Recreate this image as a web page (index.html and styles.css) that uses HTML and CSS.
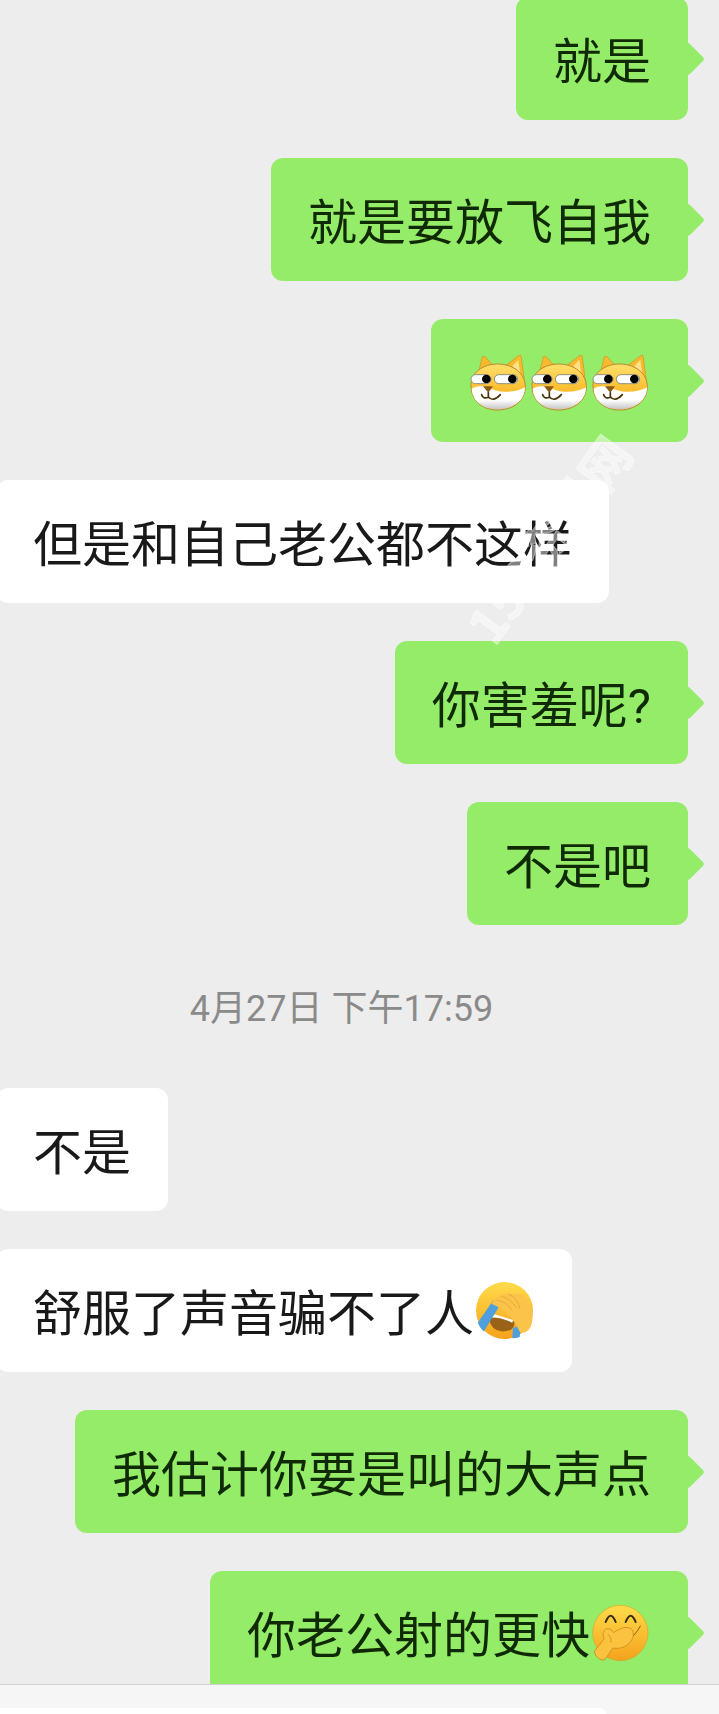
FILE: index.html
```html
<!DOCTYPE html>
<html lang="zh-CN">
<head>
<meta charset="UTF-8">
<meta name="viewport" content="width=device-width, initial-scale=1.0">
<title>聊天记录</title>
<link rel="stylesheet" href="styles.css">
</head>
<body>

<svg class="defs" aria-hidden="true">
  <defs>
    <linearGradient id="dogeFur" x1="0" y1="0" x2="0" y2="1">
      <stop offset="0" stop-color="#ffe06a"/>
      <stop offset="0.6" stop-color="#fbbb2c"/>
      <stop offset="1" stop-color="#f8b224"/>
    </linearGradient>
    <linearGradient id="dogeChin" x1="0" y1="0" x2="0" y2="1">
      <stop offset="0.6" stop-color="#ffffff"/>
      <stop offset="1" stop-color="#c4c4c4"/>
    </linearGradient>
    <linearGradient id="faceYellow" x1="0" y1="0" x2="0" y2="1">
      <stop offset="0" stop-color="#ffdc4a"/>
      <stop offset="1" stop-color="#f5a21c"/>
    </linearGradient>

    <symbol id="doge" viewBox="25 18 183 183">
      <path d="M58 80 L68 38 Q72 34 78 40 L100 64 Z" fill="#f9b92c" stroke="#c8922c" stroke-width="2"/>
      <path d="M134 68 L178 34 Q184 32 185 40 L194 110 Z" fill="#f9b92c" stroke="#c8922c" stroke-width="2"/>
      <path d="M158 66 L176 48 L182 92 Z" fill="#fde08a"/>
      <path d="M34 124 C34 84 72 60 114 60 C160 60 197 88 197 128 C197 172 158 198 114 198 C70 198 34 172 34 124 Z" fill="url(#dogeFur)" stroke="#b98a2e" stroke-width="3"/>
      <path d="M36 134 C60 120 82 128 104 138 C134 148 172 144 196 130 C196 172 158 196 114 196 C70 196 38 172 36 134 Z" fill="url(#dogeChin)"/>
      <rect x="34" y="92" width="60" height="27" rx="13.5" fill="#fff" stroke="#8f8f7a" stroke-width="3"/>
      <rect x="104" y="92" width="70" height="27" rx="13.5" fill="#fff" stroke="#8f8f7a" stroke-width="3"/>
      <circle cx="80" cy="105" r="13" fill="#000"/>
      <circle cx="158" cy="105" r="13" fill="#000"/>
      <path d="M70 127 H100 L86 146 Z" fill="#8a5a14"/>
      <path d="M66 152 Q70 166 86 160 M86 146 V158 Q100 176 122 152" fill="none" stroke="#4a3208" stroke-width="5" stroke-linecap="round"/>
    </symbol>

    <symbol id="facepalm" viewBox="15 24 180 180">
      <circle cx="105" cy="114" r="84" fill="url(#faceYellow)"/>
      <path d="M60 138 Q100 124 134 148 Q136 176 98 176 Q64 172 60 138 Z" fill="#9a6118"/>
      <path d="M64 122 L130 142 L128 150 Q96 134 60 134 Z" fill="#fff"/>
      <path d="M72 84 L92 98 L44 176 Q34 168 26 150 Z" fill="#4e9fdc"/>
      <path d="M130 166 L152 158 L150 192 Q140 196 128 196 Z" fill="#4e9fdc"/>
      <path d="M66 94 C84 66 112 60 134 66 C160 58 190 90 188 134 C186 160 178 182 152 180 C142 162 134 142 118 128 C104 114 86 102 66 94 Z" fill="#fbc349"/>
      <path d="M84 84 Q110 86 126 112 M96 72 Q122 78 140 106 M118 66 Q146 78 150 108" fill="none" stroke="#d9a02c" stroke-width="2" stroke-linecap="round"/>
    </symbol>

    <symbol id="handmouth" viewBox="15 12 183 183">
      <circle cx="106" cy="105" r="83" fill="url(#faceYellow)" stroke="#d9951c" stroke-width="1.5"/>
      <path d="M62 72 Q77 34 92 72 M122 72 Q137 34 152 72" fill="none" stroke="#3a2a10" stroke-width="6" stroke-linecap="round"/>
      <path d="M132 122 Q152 112 166 84" fill="none" stroke="#8a5a14" stroke-width="3" stroke-linecap="round"/>
      <path d="M28 160 L58 122 C50 110 56 92 70 92 C78 92 82 100 86 104 C104 90 126 84 138 92 C150 102 146 124 132 136 C116 152 98 152 84 150 L60 184 Q50 190 42 182 Q28 172 28 160 Z" fill="#fbc23f" stroke="#c98a1e" stroke-width="2.5"/>
      <path d="M70 110 Q82 120 78 132" fill="none" stroke="#c98a1e" stroke-width="2.5" stroke-linecap="round"/>
    </symbol>
  </defs>
</svg>

<div class="chat">
  <div class="row me"><div class="bubble">就是</div></div>
  <div class="row me"><div class="bubble">就是要放飞自我</div></div>
  <div class="row me">
    <div class="bubble">
      <svg class="emoji"><use href="#doge"/></svg><svg class="emoji"><use href="#doge"/></svg><svg class="emoji"><use href="#doge"/></svg>
    </div>
  </div>
  <div class="row"><div class="bubble">但是和自己老公都不这样</div></div>
  <div class="row me"><div class="bubble">你害羞呢?</div></div>
  <div class="row me"><div class="bubble">不是吧</div></div>
  <div class="time">4月27日 下午17:59</div>
  <div class="row"><div class="bubble">不是</div></div>
  <div class="row"><div class="bubble">舒服了声音骗不了人<svg class="emoji"><use href="#facepalm"/></svg></div></div>
  <div class="row me"><div class="bubble">我估计你要是叫的大声点</div></div>
  <div class="row me"><div class="bubble">你老公射的更快<svg class="emoji"><use href="#handmouth"/></svg></div></div>
</div>

<div class="footer">
  <div class="input-box"></div>
</div>

<div class="watermark">158资料网</div>

</body>
</html>
```

FILE: styles.css
```css
html, body { margin: 0; padding: 0; }
body {
  width: 719px;
  height: 1714px;
  overflow: hidden;
  display: flex;
  flex-direction: column;
  position: relative;
  background-color: #ededed;
  font-family: Roboto, "Noto Sans CJK SC", sans-serif;
  color: #191919;
}
.defs { width: 0; height: 0; position: absolute; }

.chat {
  height: 1684px;
  overflow: hidden;
  display: flex;
  flex-direction: column;
  gap: 38px;
  flex: none;
}
.row { display: flex; flex: none; margin-left: -4px; }
.row.me { justify-content: flex-end; padding-right: 31px; margin-left: 0; }
.row:first-child { margin-top: -3px; }

.bubble {
  position: relative;
  height: 123px;
  box-sizing: border-box;
  padding: 8px 37px 0;
  display: flex;
  align-items: center;
  background-color: #fff;
  border-radius: 12px;
  font-size: 49px;
  line-height: 55px;
  white-space: nowrap;
}
.me .bubble { background-color: #95ec69; color: #0f2a05; }
.me .bubble::after {
  content: "";
  position: absolute;
  top: 50%;
  right: -12px;
  width: 24px;
  height: 24px;
  margin-top: -12px;
  background-color: #95ec69;
  border-radius: 3px;
  transform: rotate(45deg);
}

.emoji { width: 61px; height: 61px; flex: none; margin-top: -8px; }

.time {
  flex: none;
  height: 87px;
  display: flex;
  align-items: center;
  justify-content: center;
  font-size: 36px;
  color: #8a8a8a;
  padding: 0 36px 4px 0;
  box-sizing: border-box;
}

.footer {
  flex: 1;
  background-color: #f6f6f6;
  border-top: 1px solid #d2d2d2;
  padding-top: 23px;
}
.input-box {
  width: 607px;
  height: 20px;
  background-color: #fff;
  border-radius: 0 8px 0 0;
}

.watermark {
  position: absolute;
  left: 407px;
  top: 508px;
  width: 280px;
  height: 60px;
  line-height: 60px;
  text-align: center;
  font-family: "Noto Sans CJK SC", sans-serif;
  font-weight: 700;
  font-size: 50px;
  white-space: nowrap;
  color: rgba(255, 255, 255, 0.45);
  -webkit-text-stroke: 1px rgba(255, 255, 255, 0.45);
  transform: rotate(-54deg);
}
```
